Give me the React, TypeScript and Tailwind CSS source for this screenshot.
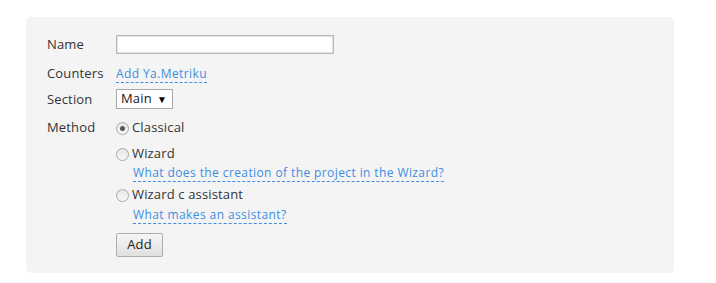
import React from 'react';

const linkCls =
  "text-[#3d8ee0] text-[12px] leading-[16px] tracking-[0.4px] no-underline border-b border-dashed border-[#3d8ee0] cursor-pointer";

const Radio = ({ checked }: { checked?: boolean }) => (
  <span className="inline-flex items-center justify-center w-[13px] h-[13px] rounded-full border border-[#a8a8a8] bg-gradient-to-b from-[#e6e6e6] to-[#f8f8f8] mr-[3px]">
    {checked && <span className="w-[5px] h-[5px] rounded-full bg-[#555]" />}
  </span>
);

export default function App() {
  const [method, setMethod] = React.useState('classical');

  return (
    <div className="w-[716px] h-[283px] bg-white pt-[17px] pl-[26px] font-['Open_Sans',sans-serif] text-[13px] tracking-[0.15px] text-[#333]">
      <div className="w-[648px] h-[256px] bg-[#f4f4f4] rounded-[5px] pt-[18px] pl-[21px]">
        <div className="grid grid-cols-[69px_1fr] items-start">
          <div className="h-[23px] leading-[19px]">Name</div>
          <div className="h-[29px]">
            <input
              type="text"
              className="block w-[218px] h-[19px] bg-white border border-[#b8b8b8] shadow-[inset_0_0_0_1px_#e2e2e2] outline-none"
            />
          </div>

          <div className="h-[25px] leading-[18px]">Counters</div>
          <div className="h-[25px] leading-[18px]">
            <a className={linkCls}>Add Ya.Metriku</a>
          </div>

          <div className="h-[30px] leading-[19px] pt-[1px]">Section</div>
          <div className="h-[30px]">
            <div className="inline-flex items-center w-[57px] h-[20px] bg-white border border-[#a9a9a9] pl-[4px] text-[13px] text-[#1a1a1a]">
              <span className="flex-1">Main</span>
              <span className="text-[10px] mr-[5px] text-black">▼</span>
            </div>
          </div>

          <div className="leading-[16px]">Method</div>
          <div>
            <label className="flex items-center h-[18px]" onClick={() => setMethod('classical')}>
              <Radio checked={method === 'classical'} />
              Classical
            </label>
            <label className="flex items-center h-[18px] mt-[8px]" onClick={() => setMethod('wizard')}>
              <Radio checked={method === 'wizard'} />
              Wizard
            </label>
            <div className="pl-[17px] leading-[18px]">
              <a className={linkCls}>What does the creation of the project in the Wizard?</a>
            </div>
            <label className="flex items-center h-[18px] mt-[5px]" onClick={() => setMethod('assistant')}>
              <Radio checked={method === 'assistant'} />
              Wizard c assistant
            </label>
            <div className="pl-[17px] mt-[1px] leading-[18px]">
              <a className={linkCls}>What makes an assistant?</a>
            </div>
            <button
              type="button"
              className="mt-[10px] w-[47px] h-[24px] border border-[#adadad] rounded-[2px] bg-gradient-to-b from-[#f6f6f6] to-[#e0e0e0] text-[13px] text-[#222]"
            >
              Add
            </button>
          </div>
        </div>
      </div>
    </div>
  );
}
